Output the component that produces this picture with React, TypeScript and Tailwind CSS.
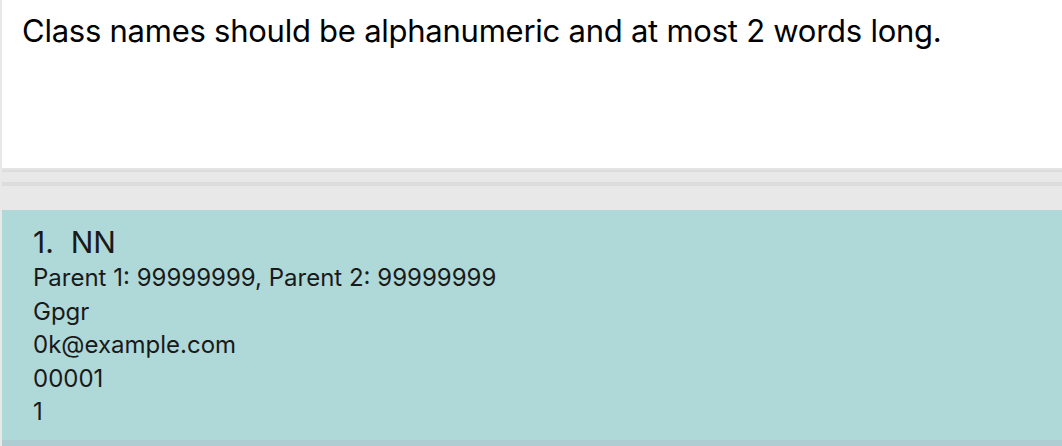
export default function App() {
  const lines = [
    "Parent 1: 99999999, Parent 2: 99999999",
    "Gpgr",
    "0k@example.com",
    "00001",
    "1",
  ];
  return (
    <div className="w-[1062px] h-[446px] overflow-hidden bg-[#e8e8e8] pl-[2px] flex flex-col font-['Inter',sans-serif]">
      {/* result display */}
      <div className="h-[168px] bg-white pl-[20px] pt-[12px] text-[31px] leading-[38px] tracking-[-0.25px] text-black">
        Class names should be alphanumeric and at most 2 words long.
      </div>
      <div className="h-[2px] bg-[#e4e4e4]"></div>
      <div className="h-[2px] bg-[#dcdcdc]"></div>
      <div className="h-[10px] bg-[#e8e8e8]"></div>
      <div className="h-[4px] bg-[#dcdcdc]"></div>
      <div className="h-[24px] bg-[#e8e8e8]"></div>

      {/* person card */}
      <div className="h-[230px] bg-[#afd8d8] pl-[31px] pt-[14px] text-[#1a1a1a]">
        <div className="text-[30px] leading-[37px]">1.&nbsp; NN</div>
        <div className="flex flex-col text-[24px] leading-[33.5px]">
          {lines.map((l, i) => (
            <div key={i}>{l}</div>
          ))}
        </div>
      </div>
      <div className="flex-1 bg-[#aecdd2]"></div>
    </div>
  );
}
